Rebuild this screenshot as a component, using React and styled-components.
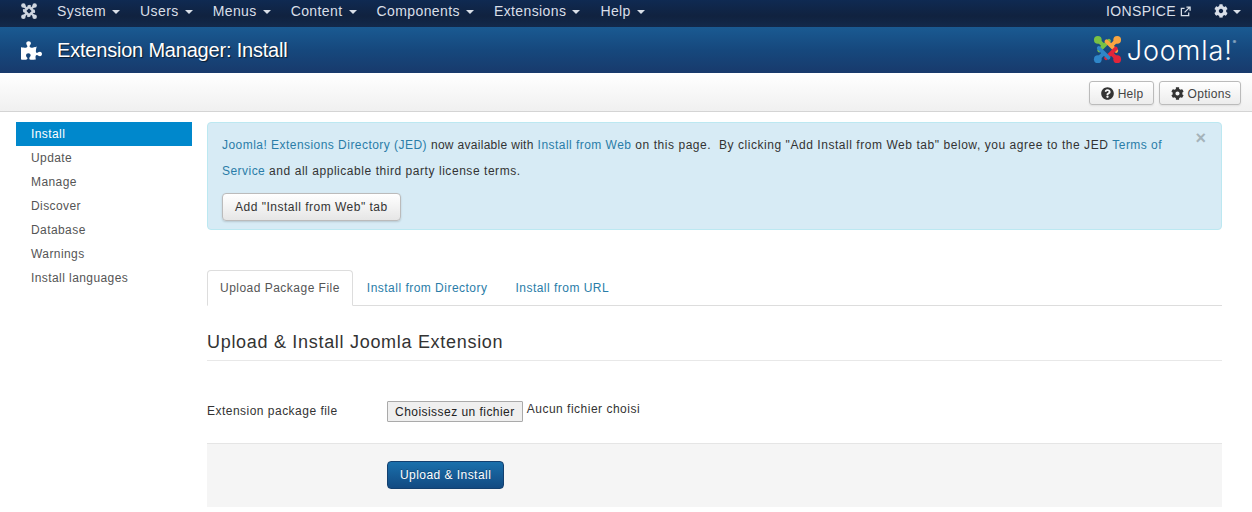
import React from "react";
import styled, { createGlobalStyle } from "styled-components";
import { FaPuzzlePiece, FaQuestionCircle, FaCog } from "react-icons/fa";

const Global = createGlobalStyle`
  html, body { margin: 0; padding: 0; background: #fff; }
  body { font-family: "Liberation Sans", Arial, sans-serif; font-size: 12px; color: #333; letter-spacing: .48px; }
  * { box-sizing: border-box; }
`;

const Page = styled.div`width: 1252px; height: 512px; overflow: hidden; display: flex; flex-direction: column;`;
const Navbar = styled.nav`
  height: 27px; flex: none; display: flex; align-items: center; padding: 0 11px 5px 20px;
  background: linear-gradient(#0f2a52, #10223f 60%, #13294b);
  color: #d9dfe8; font-size: 14px; letter-spacing: .4px;
`;
const NavMark = styled.svg`width: 18px; height: 18px; margin-right: 19px; flex: none;`;
const NavItem = styled.span`
  display: inline-flex; align-items: center; margin-right: ${p => p.$gap ?? 20}px; white-space: nowrap;
`;
const Caret = styled.i`
  display: inline-block; width: 0; height: 0; margin-left: ${p => p.$ml ?? 6}px; margin-top: 1px;
  border-left: 4px solid transparent; border-right: 4px solid transparent; border-top: 4px solid currentColor;
`;
const NavRight = styled.div`margin-left: auto; display: flex; align-items: center;`;

const Header = styled.header`
  height: 46px; flex: none; display: flex; align-items: center; padding: 0 16px 0 21px;
  background: linear-gradient(#1a5a92, #16487d 50%, #183a6c);
  color: #fff;
`;
const HeaderIcon = styled(FaPuzzlePiece)`width: 21px; height: 21px; margin-right: 15px; flex: none;`;
const Title = styled.h1`
  margin: 0; font-size: 20px; font-weight: 400; letter-spacing: -.2px; line-height: 46px; text-shadow: 1px 1px 1px rgba(0,0,0,.6);
`;
const Logo = styled.div`margin-left: auto; display: flex; align-items: center; margin-top: -1px;`;
const LogoWord = styled.span`
  font-family: Inter, Lato, "Liberation Sans", sans-serif; font-weight: 300; font-size: 27px; letter-spacing: .9px; line-height: 32px; margin: 3px 0 0 4px; color: #fff;
`;
const LogoReg = styled.sup`font-size: 5px; line-height: 0; vertical-align: 16px; letter-spacing: 0;`;

const Subhead = styled.div`
  height: 39px; flex: none; display: flex; justify-content: flex-end; align-items: center; gap: 5px; padding: 2px 11px 0 0;
  background: linear-gradient(#fff, #f0f0f0); border-bottom: 1px solid #d4d4d4;
`;
const ToolButton = styled.button`
  height: 24px; padding: 1px 9px 0 11px; display: inline-flex; align-items: center; gap: 4px; font: inherit; color: #444; letter-spacing: .3px;
  background: linear-gradient(#fff, #ececec); border: 1px solid #bbb; border-radius: 3px; box-shadow: 0 1px 2px rgba(0,0,0,.08);
  svg { width: 13px; height: 13px; color: #333; margin-top: -1px; }
`;

const Body = styled.div`flex: 1; display: flex; padding: 10px 30px 0 16px; gap: 15px; min-height: 0;`;
const Sidebar = styled.ul`list-style: none; margin: 0; padding: 0; width: 176px; flex: none; letter-spacing: .42px;`;
const SideItem = styled.li`
  height: 24px; line-height: 25px; padding-left: 15px; color: ${p => p.$active ? "#fff" : "#555"};
  background: ${p => p.$active ? "#0088cc" : "transparent"};
`;
const Main = styled.main`flex: 1; min-width: 0;`;

const Alert = styled.div`
  position: relative; height: 108px; padding: 9px 50px 9px 14px; background: #d7ebf5; border: 1px solid #bce8f1; border-radius: 4px; color: #333; line-height: 26px; letter-spacing: .55px;
`;
const AlertLink = styled.a`color: #2a7da8; letter-spacing: .46px;`;
const Tight = styled.span`letter-spacing: .3px;`;
const Close = styled.span`
  position: absolute; top: 5px; right: 15px; font-size: 18px; font-weight: 700; line-height: 20px; color: #a5b3ba; letter-spacing: 0;
`;
const AlertButton = styled.button`
  display: block; margin-top: 9px; height: 28px; padding: 0 12px; font: inherit; color: #333; letter-spacing: .5px;
  background: linear-gradient(#fff, #e6e6e6); border: 1px solid #bbb; border-radius: 4px; box-shadow: 0 1px 2px rgba(0,0,0,.15);
`;

const Tabs = styled.div`display: flex; height: 36px; margin-top: 40px; border-bottom: 1px solid #ddd;`;
const Tab = styled.div`
  height: 36px; line-height: ${p => p.$active ? "35px" : "37px"}; padding: 0 ${p => p.$active ? "12px" : "14px"};
  color: ${p => p.$active ? "#555" : "#2a7da8"};
  ${p => p.$active && "background:#fff;border:1px solid #ddd;border-bottom-color:#fff;border-radius:4px 4px 0 0;"}
`;
const Heading = styled.h3`
  margin: 24px 0 0; height: 31px; font-size: 18px; font-weight: 400; line-height: 24px; color: #333; border-bottom: 1px solid #e8e8e8; letter-spacing: .7px;
`;
const FormRow = styled.div`display: flex; align-items: flex-start; margin-top: 40px; height: 42px;`;
const FieldLabel = styled.label`width: 180px; flex: none; line-height: 20px;`;
const FileButton = styled.span`
  display: inline-block; height: 21px; line-height: 20px; padding: 0 7px; color: #222; background: #efefef; border: 1px solid #aaa; border-radius: 1px;
  letter-spacing: .46px;
`;
const FileName = styled.span`margin: -2px 0 0 4px; line-height: 20px; color: #333; letter-spacing: .5px;`;
const Actions = styled.div`height: 64px; background: #f5f5f5; border-top: 1px solid #e5e5e5; padding: 17px 0 0 180px;`;
const Primary = styled.button`
  height: 28px; padding: 0 12px; font: inherit; color: #fff; border: 1px solid #13406f; border-radius: 4px;
  background: linear-gradient(#1a70ac, #124a82); letter-spacing: .45px; text-shadow: 0 -1px 0 rgba(0,0,0,.25);
`;

const Mark = ({ colors, ...p }) => (
  <svg viewBox="0 0 32 32" {...p}>
    {colors.map((c, i) => (
      <g key={i} transform={`rotate(${i * 90} 16 16)`} fill="none" stroke={c} strokeWidth="4">
        <path d="M7 7 L12.3 12.3" />
        <path d="M7.5 17 L17.5 7" strokeLinecap="round" />
        <circle cx="6" cy="6" r="4" fill={c} stroke="none" />
      </g>
    ))}
  </svg>
);

const Ext = styled.svg`width: 11px; height: 11px; margin-left: 4px;`;

export default function App() {
  return (
    <Page>
      <Global />
      <Navbar>
        <NavMark as={Mark} colors={["#cfd6e0", "#cfd6e0", "#cfd6e0", "#cfd6e0"]} />
        {["System", "Users", "Menus", "Content", "Components", "Extensions", "Help"].map(n => (
          <NavItem key={n}>{n}<Caret /></NavItem>
        ))}
        <NavRight>
          <NavItem $gap={23}>IONSPICE
            <Ext viewBox="0 0 12 12" fill="none" stroke="currentColor" strokeWidth="1.4">
              <path d="M9.5 7v3.5h-8v-8H5" />
              <path d="M5 7l5.5-5.5M7 1.2h4v4" />
            </Ext>
          </NavItem>
          <NavItem $gap={0}><FaCog size={14} /><Caret $ml={5} /></NavItem>
        </NavRight>
      </Navbar>
      <Header>
        <HeaderIcon />
        <Title>Extension Manager: Install</Title>
        <Logo>
          <Mark colors={["#7ac143", "#f9a541", "#e1253a", "#2f86c8"]} width="31" height="33" />
          <LogoWord>Joomla!<LogoReg>®</LogoReg></LogoWord>
        </Logo>
      </Header>
      <Subhead>
        <ToolButton><FaQuestionCircle />Help</ToolButton>
        <ToolButton><FaCog />Options</ToolButton>
      </Subhead>
      <Body>
        <Sidebar>
          <SideItem $active>Install</SideItem>
          {["Update", "Manage", "Discover", "Database", "Warnings", "Install languages"].map(n => <SideItem key={n}>{n}</SideItem>)}
        </Sidebar>
        <Main>
          <Alert>
            <Close>×</Close>
            <AlertLink>Joomla! Extensions Directory (JED)</AlertLink> <Tight>now available with</Tight> <AlertLink>Install from Web</AlertLink> on this page.&nbsp; By clicking "Add Install from Web tab" below, you agree to the JED <AlertLink>Terms of Service</AlertLink> and all applicable third party license terms.
            <AlertButton>Add "Install from Web" tab</AlertButton>
          </Alert>
          <Tabs>
            <Tab $active>Upload Package File</Tab>
            <Tab>Install from Directory</Tab>
            <Tab>Install from URL</Tab>
          </Tabs>
          <Heading>Upload &amp; Install Joomla Extension</Heading>
          <FormRow>
            <FieldLabel>Extension package file</FieldLabel>
            <FileButton>Choisissez un fichier</FileButton>
            <FileName>Aucun fichier choisi</FileName>
          </FormRow>
          <Actions><Primary>Upload &amp; Install</Primary></Actions>
        </Main>
      </Body>
    </Page>
  );
}
